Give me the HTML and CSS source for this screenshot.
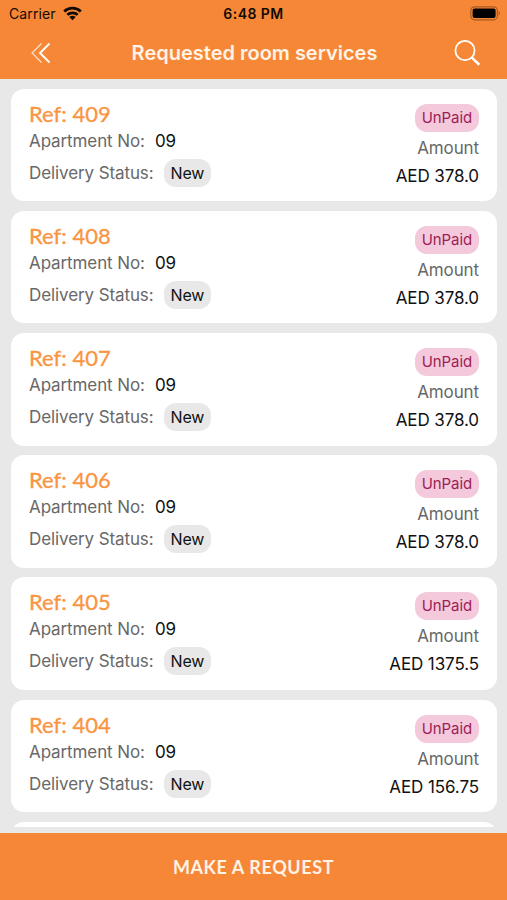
FILE: index.html
```html
<!DOCTYPE html>
<html lang="en">
<head>
  <meta charset="UTF-8" />
  <meta name="viewport" content="width=device-width, initial-scale=1.0"/>
  <title>Requested room services</title>
  <link rel="stylesheet" href="styles.css">
</head>
<body>

  <header class="header">
    <div class="status-bar">
      <div class="carrier">
        <span>Carrier</span>
        <svg width="19" height="15" viewBox="0 0 19 15" fill="none" stroke="#120a04" stroke-width="2.7">
          <path d="M1.200 5.400C5.800 1 13.200 1 17.800 5.400"/>
          <path d="M4.300 8.800C7.300 6.100 11.700 6.100 14.700 8.800"/>
          <path d="M9.500 14.200L6.300 10.900C8.100 9.400 10.900 9.400 12.700 10.900Z" fill="#120a04" stroke="none"/>
        </svg>
      </div>
      <span class="time">6:48 PM</span>
      <svg class="battery" width="31" height="15" viewBox="0 0 31 15">
        <rect x="0.8" y="0.8" width="26.600" height="13" rx="3.800" fill="none" stroke="#a65a23" stroke-width="1.200"/>
        <rect x="2.600" y="2.600" width="23" height="9.400" rx="2" fill="#000"/>
        <path d="M28.700 5.200C30.400 5.900 30.400 8.700 28.700 9.400Z" fill="#a65a23"/>
      </svg>
    </div>
    <div class="nav">
      <svg class="back" width="22" height="22" viewBox="0 0 22 22" fill="none" stroke="#fff">
        <path d="M11.500 1.500L2 11L11.500 20.500" stroke-width="1.100" opacity="0.8"/>
        <path d="M19.500 1.500L10 11L19.500 20.500" stroke-width="1.900"/>
      </svg>
      <h1 class="title">Requested room services</h1>
      <svg class="search" width="28" height="28" viewBox="0 0 28 28" fill="none" stroke="#fff">
        <circle cx="12" cy="11.500" r="9.600" stroke-width="1.800"/>
        <path d="M18.600 18.400L26.300 25.800" stroke-width="2.600"/>
      </svg>
    </div>
  </header>

  <main class="list">
    <div class="card">
      <div class="details">
        <div class="ref">Ref: 409</div>
        <div class="row"><span class="label">Apartment No:</span><span class="value">09</span></div>
        <div class="row status"><span class="label">Delivery Status:</span><span class="badge">New</span></div>
      </div>
      <div class="payment">
        <span class="badge unpaid">UnPaid</span>
        <span class="label">Amount</span>
        <span class="price">AED 378.0</span>
      </div>
    </div>
    <div class="card">
      <div class="details">
        <div class="ref">Ref: 408</div>
        <div class="row"><span class="label">Apartment No:</span><span class="value">09</span></div>
        <div class="row status"><span class="label">Delivery Status:</span><span class="badge">New</span></div>
      </div>
      <div class="payment">
        <span class="badge unpaid">UnPaid</span>
        <span class="label">Amount</span>
        <span class="price">AED 378.0</span>
      </div>
    </div>
    <div class="card">
      <div class="details">
        <div class="ref">Ref: 407</div>
        <div class="row"><span class="label">Apartment No:</span><span class="value">09</span></div>
        <div class="row status"><span class="label">Delivery Status:</span><span class="badge">New</span></div>
      </div>
      <div class="payment">
        <span class="badge unpaid">UnPaid</span>
        <span class="label">Amount</span>
        <span class="price">AED 378.0</span>
      </div>
    </div>
    <div class="card">
      <div class="details">
        <div class="ref">Ref: 406</div>
        <div class="row"><span class="label">Apartment No:</span><span class="value">09</span></div>
        <div class="row status"><span class="label">Delivery Status:</span><span class="badge">New</span></div>
      </div>
      <div class="payment">
        <span class="badge unpaid">UnPaid</span>
        <span class="label">Amount</span>
        <span class="price">AED 378.0</span>
      </div>
    </div>
    <div class="card">
      <div class="details">
        <div class="ref">Ref: 405</div>
        <div class="row"><span class="label">Apartment No:</span><span class="value">09</span></div>
        <div class="row status"><span class="label">Delivery Status:</span><span class="badge">New</span></div>
      </div>
      <div class="payment">
        <span class="badge unpaid">UnPaid</span>
        <span class="label">Amount</span>
        <span class="price">AED 1375.5</span>
      </div>
    </div>
    <div class="card">
      <div class="details">
        <div class="ref">Ref: 404</div>
        <div class="row"><span class="label">Apartment No:</span><span class="value">09</span></div>
        <div class="row status"><span class="label">Delivery Status:</span><span class="badge">New</span></div>
      </div>
      <div class="payment">
        <span class="badge unpaid">UnPaid</span>
        <span class="label">Amount</span>
        <span class="price">AED 156.75</span>
      </div>
    </div>
    <div class="card"></div>
  </main>

  <button class="request-btn">MAKE A REQUEST</button>

</body>
</html>
```
FILE: styles.css
```css
* {
  box-sizing: border-box;
}

body {
  display: flex;
  flex-direction: column;
  height: 900px;
  margin: 0;
  background: #e8e8e8;
  color: #111;
  font-family: Inter, "Liberation Sans", sans-serif;
  overflow: hidden;
}

.header {
  flex-shrink: 0;
  height: 79px;
  background: #f68737;
}

.status-bar {
  display: grid;
  grid-template-columns: 1fr auto 1fr;
  align-items: center;
  height: 27px;
  padding: 0 6px 0 9px;
  color: #120a04;
  font-size: 14px;
}

.carrier {
  display: flex;
  align-items: center;
  gap: 7px;
  letter-spacing: 0.1px;
}

.time {
  padding-right: 3px;
  font-weight: 600;
  letter-spacing: 0.45px;
}

.battery {
  justify-self: end;
}

.nav {
  display: flex;
  align-items: center;
  justify-content: space-between;
  height: 52px;
  padding: 0 26px 0 30px;
}

.title {
  margin: 0;
  padding-left: 4px;
  color: #fff3e6;
  font-size: 20px;
  font-weight: 600;
}

.list {
  display: flex;
  flex-direction: column;
  gap: 9.7px;
  height: 748px;
  padding: 9.7px 10px 0 11px;
  overflow: hidden;
}

.card {
  display: flex;
  flex-shrink: 0;
  justify-content: space-between;
  height: 112.5px;
  padding: 11px 18px 0;
  background: #fff;
  border-radius: 13px;
}

.ref {
  color: #f9953f;
  font-family: Lato, sans-serif;
  font-size: 22px;
  line-height: 28px;
  -webkit-text-stroke: 0.3px #f9953f;
}

.row {
  display: flex;
  align-items: center;
  gap: 10px;
  height: 26px;
  font-size: 17px;
  letter-spacing: -0.1px;
}

.row.status {
  height: 28px;
  margin-top: 5px;
}

.label {
  color: #686868;
  font-size: 17px;
}

.badge {
  height: 28px;
  padding: 0 7px;
  background: #e8e8e8;
  border-radius: 12px;
  font-size: 16px;
  line-height: 28px;
  letter-spacing: -0.2px;
}

.payment {
  display: flex;
  flex-direction: column;
  align-items: flex-end;
  padding-top: 4px;
  font-size: 17px;
  line-height: 28px;
  letter-spacing: -0.1px;
}

.badge.unpaid {
  margin-bottom: 2px;
  background: #f4c9db;
  color: #a01d56;
  font-size: 15px;
  letter-spacing: -0.1px;
}

.request-btn {
  height: 67px;
  margin: 6px 0 0;
  padding: 0;
  border: none;
  background: #f68737;
  color: #fff3e6;
  font-family: Lato, sans-serif;
  font-size: 18px;
  font-weight: 700;
  letter-spacing: 0.6px;
}
```
